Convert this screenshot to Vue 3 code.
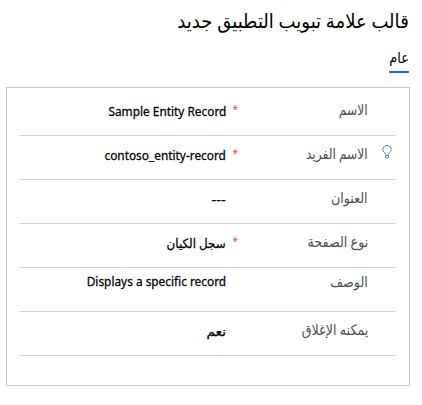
<script setup>
const rows = [
  { key: 'name', label: 'الاسم', value: 'Sample Entity Record', required: true },
  { key: 'unique', label: 'الاسم الفريد', value: 'contoso_entity-record', required: true, hint: true },
  { key: 'title', label: 'العنوان', value: '---' },
  { key: 'type', label: 'نوع الصفحة', value: 'سجل الكيان', required: true, arabic: true },
  { key: 'description', label: 'الوصف', value: 'Displays a specific record', top: true },
  { key: 'closable', label: 'يمكنه الإغلاق', value: 'نعم', arabic: true },
]
</script>

<template>
  <main class="page" dir="rtl">
    <h1 class="heading"><span class="heading-text">قالب علامة تبويب التطبيق جديد</span></h1>
    <nav class="tabs"><span class="tab"><span class="tab-text">عام</span></span></nav>
    <section class="panel">
      <div v-for="row in rows" :key="row.key" class="row" :class="row.key">
        <span class="icon">
          <svg v-if="row.hint" width="10" height="14" viewBox="0 0 10 14" fill="none" stroke="#5c80b8">
            <path d="M3.5 10.5V9.3C3.5 7.7.8 6.9.8 4.6a4.2 4.1 0 0 1 8.4 0c0 2.3-2.7 3.1-2.7 4.7v1.2M3.5 10.5h3v2.5h-3z" />
          </svg>
        </span>
        <span class="label"><span class="text">{{ row.label }}</span></span>
        <span class="star">{{ row.required ? '*' : '' }}</span>
        <span class="value" :class="{ arabic: row.arabic, top: row.top }"><bdi class="text">{{ row.value }}</bdi></span>
      </div>
    </section>
  </main>
</template>

<style>
body { background: #fff; }
</style>

<style scoped>
.page {
  box-sizing: border-box;
  width: 422px;
  height: 405px;
  padding: 0 12px 0 6px;
  overflow: hidden;
  background: #fff;
  color: #000;
  font-family: "Noto Sans", "DejaVu Sans", sans-serif;
}
.heading {
  margin: 0;
  height: 46px;
  padding-right: 1px;
  font-size: 18px;
  line-height: 40px;
  font-weight: 400;
  white-space: nowrap;
}
.heading-text, .tab-text, .text { display: inline-block; transform-origin: right center; }
.heading-text { transform: scale(1.003, 1.1); }
.tab-text { transform: scaleY(1.12); }
.tabs { height: 41px; display: flex; padding-right: 1px; }
.tab {
  box-sizing: border-box;
  width: 20px;
  height: 27px;
  border-bottom: 2px solid #2266e3;
  font-size: 13px;
  line-height: 23px;
  white-space: nowrap;
}
.panel {
  box-sizing: border-box;
  height: 299px;
  border: 1px solid #c8c8c8;
  padding: 4px 13px 0 12px;
}
.row {
  box-sizing: border-box;
  height: 44px;
  display: flex;
  border-bottom: 1px solid #d6d6d6;
  white-space: nowrap;
}
.icon { width: 28px; padding: 9px 4px 0 0; box-sizing: border-box; }
.icon svg { display: block; }
.label { width: 129px; font-size: 13px; line-height: 34px; color: #4c4c4c; }
.label .text { transform: scale(0.975, 1.12); }
.name .label .text, .unique .label .text { transform: scale(0.94, 1.12); }
.description .label { line-height: 27px; }
.star { width: 13px; padding-right: 1px; box-sizing: border-box; font-size: 10px; line-height: 34px; color: #ec4450; }
.value { flex: 1; font-size: 12px; line-height: 40px; -webkit-text-stroke: 0.25px #000; }
.value .text { transform: scale(0.988, 1.03); }
.value.top { line-height: 28px; }
.value.arabic { line-height: 40px; }
.value.arabic .text { transform: scale(0.99, 1.06); }
.closable .value.arabic .text { transform: scale(1.15, 1.06); }
.title .value .text { transform: scaleX(1.22); }
</style>
